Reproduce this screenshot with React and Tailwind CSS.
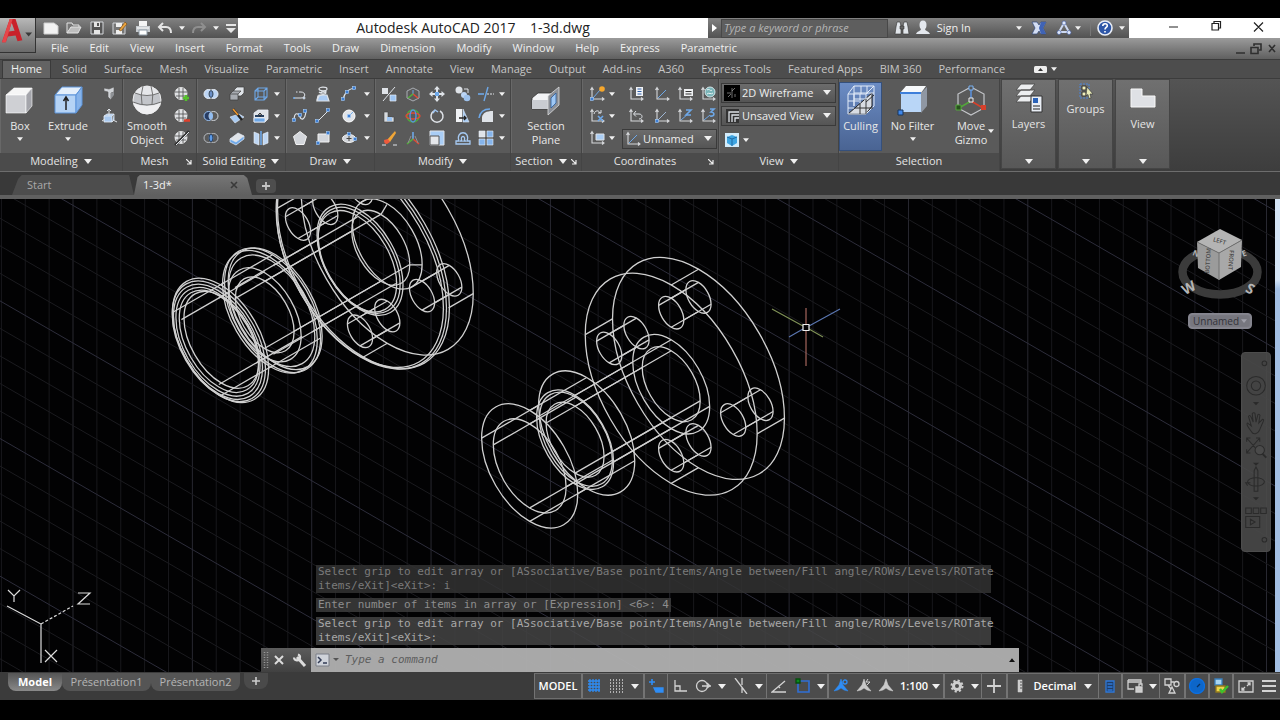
import React from 'react';

const MENUS = ['File', 'Edit', 'View', 'Insert', 'Format', 'Tools', 'Draw', 'Dimension', 'Modify', 'Window', 'Help', 'Express', 'Parametric'];

const RIBBON_TABS = ['Solid', 'Surface', 'Mesh', 'Visualize', 'Parametric', 'Insert', 'Annotate', 'View', 'Manage', 'Output', 'Add-ins', 'A360', 'Express Tools', 'Featured Apps', 'BIM 360', 'Performance'];

const W = '#dfe3e8';
const B = '#6ea8e8';

// Small 16px tool glyphs
const GLYPHS = {
  new: <path d="M1 3h10l4 3v8H1z" fill="#f2f2f2" stroke="#cfcfcf" />,
  open: <g stroke="#e4e4e4" fill="#777"><path d="M1 13V3h5l1 2h6v2" /><path d="M1 13l4-6h10l-3 6z" fill="#bdbdbd" /></g>,
  save: <g><path d="M2 2h12v12H2z" fill="#555" stroke="#d5d8dc" /><path d="M5 2h6v5H5z" fill="#e5e5e5" /><path d="M5 10h6v4H5z" fill="#e5e5e5" /><path d="M8 3h2v3H8z" fill="#555" /></g>,
  saveas: <g><path d="M1 3h12v11H1z" fill="#777" stroke="#d5d8dc" /><path d="M4 3h6v4H4zM4 10h6v4H4z" fill="#eee" /><path d="M7 10l6-8 2 2-6 7z" fill="#e9a23d" stroke="#704512" strokeWidth=".6" /></g>,
  plot: <g><path d="M4 1h8v6H4z" fill="#f5f5f5" /><path d="M1 6h14v6H1z" fill="#c5c9cd" /><path d="M4 10h8v5H4z" fill="#fff" stroke="#8d9aa5" /><path d="M2 8h12" stroke="#fff" /></g>,
  undo: <path d="M6 3L2 7l4 4M2 7h7c4 0 5 2 5 6" fill="none" stroke="#e6e6e6" strokeWidth="2" />,
  redo: <path d="M10 3l4 4-4 4M14 7H7c-4 0-5 2-5 6" fill="none" stroke="#8f8f8f" strokeWidth="2" />,
  customize: <g fill="#e6e6e6"><path d="M3 4h10v2H3zM3 8h10l-5 5z" /></g>,
  find: <g fill="#e1e5ea" stroke="#333" strokeWidth=".6"><path d="M2 7l1-5h3l1 4v8H1z" /><path d="M9 6l1-4h3l1 5 1 7H9z" /><path d="M6 6h4v3H6z" fill="#666" /></g>,
  user: <g fill="#e4e8ee"><ellipse cx="8" cy="5" rx="3.5" ry="4.5" /><path d="M1 14c2-4 4-2 5-5h4c1 3 3 1 5 5z" /></g>,
  exchange: <g><path d="M1 2h5l2 3 2-3h5l-3 6 3 6h-5l-2-3-2 3H1l3-6z" fill="#d4def3" stroke="#30477a" strokeWidth=".7" /><path d="M10 2h5l-3 6 3 6h-5L8 8z" fill="#3f63b5" /></g>,
  a360: <g><path d="M8 3l5 9H3z" fill="none" stroke="#cdd9f2" strokeWidth="2" /><g fill="#dfe8fa" stroke="#3d57a0" strokeWidth=".6"><circle cx="8" cy="3" r="2" /><circle cx="3" cy="12.500" r="2" /><circle cx="13" cy="12.500" r="2" /></g></g>,
  help: <g><circle cx="8" cy="8" r="7" fill="#2e57a8" stroke="#e9eef7" strokeWidth="1.6" /><path d="M5.800 6c0-3 4.500-3 4.500-.3C10.300 7.500 8 7.500 8 9.500M8 11v1.600" fill="none" stroke="#fff" strokeWidth="1.6" /></g>,
  polysolid: <g><path d="M3 2l5 1 5-2v5l-3 1v7l-3-3V6L3 5z" fill="#cfd2d6" stroke="#555" strokeWidth=".6" /><path d="M10 7l3-1v3l-3 4z" fill="#8f9296" /></g>,
  presspull: <g><path d="M3 8h8v6H3zM3 8l3-2h7l-2 2M13 6v6l-2 2" fill="#a9c9ef" stroke="#e7edf5" strokeWidth=".8" /><path d="M8 8V1M6 3l2-2 2 2M1 13l3-2M12 12l4 2" stroke={W} fill="none" /></g>,
  meshMore: <g><Globe /><path d="M12 9v6M9 12h6" stroke="#55c12c" strokeWidth="2.500" /></g>,
  meshLess: <g><Globe /><path d="M10 12.500h6" stroke="#e0402c" strokeWidth="2.500" /></g>,
  meshRefine: <g><Globe /><path d="M1 15L15 1" stroke="#333" strokeWidth="2.400" /><path d="M2 15L15 2" stroke={W} /></g>,
  union: <g fill="#bcd5f5" stroke="#e8eef6"><circle cx="5.500" cy="8" r="4.500" /><circle cx="10.500" cy="8" r="4.500" /><ellipse cx="8" cy="8" rx="2" ry="3.400" fill="#6a8fc8" stroke="#345" /></g>,
  subtract: <g fill="none" stroke="#cfd3d8"><circle cx="5.500" cy="8" r="4.500" fill="#263c63" stroke="#9cc3f3" /><circle cx="10.500" cy="8" r="4.500" fill="#5a5a5a" /><ellipse cx="8" cy="8" rx="2" ry="3.600" fill="#92bdf0" stroke="none" /></g>,
  intersect: <g fill="none" stroke="#b6bac0"><circle cx="5.500" cy="8" r="4.500" /><circle cx="10.500" cy="8" r="4.500" /><ellipse cx="8" cy="8" rx="2" ry="3.600" fill="#5d9be8" stroke="#1d3557" /></g>,
  extrudeFaces: <g stroke="#3c3c3c" strokeWidth=".7"><path d="M5 4l3-3h7v6l-3 3H5z" fill={W} /><path d="M1 8h8v6H1zM1 8l3-3h8L9 8" fill="#a7abb1" /></g>,
  slice: <g><path d="M1 9l9-3 5 3-9 6z" fill="#a8caf2" stroke="#e8eef6" strokeWidth=".6" /><path d="M4 1l9 11" stroke="#222" strokeWidth="2.400" /><path d="M4 1l5 6" stroke="#e9952f" strokeWidth="1.800" /></g>,
  thicken: <g stroke="#e8eef6" strokeWidth=".7"><path d="M1 9l8-6 6 3-8 6z" fill={W} /><path d="M1 9l6 3 8-6v3l-8 6-6-3z" fill={B} /></g>,
  boxEdges: <path d="M2 5h9v9H2zM2 5l3-3h9v9l-3 3M11 5l3-3M5 2v9h9M5 11l-3 3" fill="none" stroke={B} strokeWidth="1.100" />,
  shell: <g stroke="#e8eef6" strokeWidth=".8"><path d="M1 5l4-3h10v9l-3 3H1z" fill={W} /><path d="M2 7h9v2H2z" fill="#28405f" stroke="none" /><path d="M1 10h11v4H1z" fill={B} /><path d="M7 5v4M5 7l2-2 2 2" fill="none" stroke="#222" /></g>,
  separate: <g fill="#bed6f3" stroke="#eef3f9" strokeWidth=".6"><path d="M1 2l5 2v11l-5-2zM15 2l-5 2v11l5-2z" /><path d="M8 1v14" stroke={B} strokeWidth="1.600" /></g>,
  polyline: <g fill="none" stroke={W}><path d="M2 12h7c5 0 5-6 0-6" /><path d="M9 6H4" strokeDasharray="2 1.500" /><circle cx="2" cy="12" r="1" fill={B} stroke="none" /><circle cx="12" cy="12" r="1" fill={B} /></g>,
  helix: <g fill="none" stroke={W} strokeWidth="1.200"><path d="M3 10l10 4H2z" fill="#b8d3f4" /><path d="M2 15h12l-2-6H4z" fill="#a9caf2" /><ellipse cx="8" cy="3" rx="4" ry="1.800" /><path d="M4 6c2 2 7 1 7-1M3 12c0-4 8-3 8-5 0-2-5-2-5 0" /></g>,
  arc: <g><path d="M2 14C3 7 8 2 15 2" fill="none" stroke={W} strokeWidth="1.200" /><Node x="2" y="13" /><Node x="6" y="6" /><Node x="13" y="2" /></g>,
  spline: <g><path d="M2 13C2 2 7 6 8 9s5 4 6-6" fill="none" stroke={W} strokeWidth="1.200" /><Node x="2" y="12" /><Node x="8" y="7" /><Node x="13" y="3" /></g>,
  line: <g><path d="M2 14L14 2" stroke={W} /><Node x="2" y="13" /><Node x="13" y="2" /></g>,
  circle: <g><circle cx="8" cy="8" r="6" fill={W} stroke="#fff" /><path d="M8 8l4-4" stroke={B} /><Node x="8" y="8" /></g>,
  polygon: <path d="M8 1.500l6.500 5-2.500 8H4l-2.500-8z" fill="#d2d5da" stroke="#f2f2f2" />,
  rect: <g><path d="M3 4h11v8H3z" fill="#d2d5da" stroke="#f2f2f2" /><Node x="13" y="3" /><Node x="3" y="13" /></g>,
  ellipse: <g><ellipse cx="8" cy="8.500" rx="6.500" ry="4" fill="#d2d5da" stroke="#f2f2f2" /><path d="M8 6v5M5.500 8.500h5" stroke="#444" /><Node x="8" y="4" /><Node x="14" y="9" /></g>,
  align3d: <g><path d="M1 2h6v6H1z" fill={W} /><path d="M9 9h6v6H9z" fill="#9cc4f2" stroke="#e8eef6" strokeWidth=".7" /><path d="M2 15L14 1" stroke={W} /></g>,
  scale3d: <g><path d="M3 4h4v5h6v5H3z" fill="#d6dade" stroke="#444" strokeWidth=".6" /><path d="M6 9h5v4H6z" fill="#9cc4f2" /></g>,
  erase: <g><path d="M6 10l8-9 1 2-6 9z" fill="#f0a637" /><path d="M3 10l4-1 2 3-3 2c-2 0-3-1-3-4z" fill="#ef5a3c" /><path d="M1 15h4M12 15h4" stroke={W} /></g>,
  move3d: <g fill="none" stroke="#a9adb3"><path d="M8 2l6 3v7l-6 3-6-3V5z" /><path d="M8 8V4" stroke={B} /><path d="M8 8l5 4" stroke="#e24a35" strokeWidth="1.600" /><path d="M8 8l-5 4" stroke="#52b13b" strokeWidth="1.600" /></g>,
  rotate3d: <g fill="none" strokeWidth="1.400"><circle cx="8" cy="8" r="6" stroke="#4eab3b" /><ellipse cx="8" cy="8" rx="7" ry="3" stroke="#df4936" /><ellipse cx="8" cy="8" rx="3" ry="6" stroke="#5a92e0" /></g>,
  scaleGizmo: <g strokeWidth="1.600" fill="none"><path d="M8 9V2" stroke={B} /><path d="M8 9l6 5" stroke="#e24a35" /><path d="M8 9l-6 5" stroke="#52b13b" /><path d="M6 6l-3 7M10 6l3 7" stroke="#919191" strokeWidth="1" /></g>,
  move: <g fill={W}><path d="M8 0l3 3.500H9V7h3.500V5L16 8l-3.500 3V9H9v3.500h2L8 16l-3-3.500h2V9H3.500v2L0 8l3.500-3v2H7V3.500H5z" /><path d="M6 6h4v4H6z" fill={B} /></g>,
  rotate: <g fill="none" stroke={W} strokeWidth="1.500"><path d="M5 3a6 6 0 1 0 6 0" /><path d="M4 5l2-3 3 2" stroke="#9ec3ef" /></g>,
  scale: <g><path d="M1 1h14v14H1z" fill="#a9cdf5" stroke={W} /><path d="M1 6h9v9H1z" fill="#e5e7ea" stroke="#555" /></g>,
  copy: <g><circle cx="4" cy="4" r="3.500" fill={W} /><circle cx="9" cy="9" r="3" fill="#bcd5f5" /><circle cx="12" cy="12" r="3.300" fill="#9dc1ec" /><path d="M9 3h4v4" fill="none" stroke={W} /></g>,
  mirror: <g><path d="M1 1h6v13H1z" fill="#f0f2f5" /><path d="M8 1l6 13H8z" fill="#a6caf3" stroke="#dce8f7" strokeWidth=".6" /><path d="M4 10h7M9 8l2 2-2 2" stroke="#222" fill="none" strokeWidth="1.300" /></g>,
  offset: <path d="M1 14h14v-3h-3C16 0 0 0 4 11H1zM5 11h2c-3-6 5-6 2 0h2" fill="none" stroke="#a6caf3" strokeWidth="1.300" />,
  trim: <g fill="none"><path d="M0 8h6" stroke={B} strokeWidth="1.600" /><path d="M9 8h7" stroke={W} strokeDasharray="2 1" /><path d="M6 15L10 1" stroke={B} strokeWidth="1.400" /></g>,
  fillet: <g><path d="M4 14V9c1-4 4-6 11-6v11z" fill={W} /><path d="M1 10C2 4 6 1 12 1" fill="none" stroke={B} strokeWidth="1.500" /></g>,
  array: <g stroke="#e7eef7" strokeWidth=".6" fill="#86b5ec"><path d="M1 1h6v6H1z" fill={W} /><path d="M9 1h6v6H9zM1 9h6v6H1zM9 9h6v6H9z" /></g>,
  ucsWorld: <g><Ucs /><path d="M4 12l7-8" stroke={B} /><circle cx="13" cy="3" r="2.800" fill="#f6a72c" /><Node x="3" y="13" /></g>,
  ucsX: <g><Ucs /><path d="M5 6c1-4 5-4 6-1M9 5h3V2" stroke={W} fill="none" /><path d="M9 8l5 5M14 8l-5 5" stroke={B} strokeWidth="1.600" /></g>,
  ucsView: <g><Ucs /><path d="M7 4h8v6H7z" fill="#aacdf4" stroke={W} /></g>,
  ucsNamed: <g><Ucs /><path d="M8 1h7v9H8z" fill="#f1f3f5" /><path d="M9.500 3h4M9.500 5.500h4M9.500 8h4" stroke="#2d5da8" /></g>,
  ucs: <g><Ucs /><path d="M4 12l8-8" stroke={B} /></g>,
  ucsPrev: <g><Ucs /><path d="M6 6h5c4 0 4 5 0 5M8 3L5.500 6 8 8.500" stroke={W} fill="none" /></g>,
  ucsOrigin: <g><Ucs /><path d="M4 12l8-8" stroke="#9fb7d5" /><Node x="3" y="13" /></g>,
  ucsList: <g><Ucs /><path d="M7 3h9v7H7z" fill="#eef0f2" /><path d="M8.500 5.500h6M8.500 8h6" stroke="#333" /></g>,
  ucsZ: <g><Ucs /><path d="M4 12l7-6" stroke={B} /><path d="M9 2h5L9 7h5" stroke={B} strokeWidth="1.600" fill="none" /></g>,
  ucsGlobe: <g><Ucs /><circle cx="10" cy="6" r="5" fill="#79b4b8" stroke="#d5e6ea" /><path d="M7 4c3-2 3 2 5 0M7 8c2-2 4 1 6-1" stroke="#e9f3f3" fill="none" /></g>,
  ucs3: <g><Ucs /><path d="M4 12l6-5" stroke={B} /><path d="M10 1h4l-3 3c4 0 4 5-1 4" stroke={B} strokeWidth="1.600" fill="none" /></g>,
  wire: <g><path d="M0 0h16v16H0z" fill="#000" /><path d="M3 8h4M8 3v10M11 3l-3 3M11 9v3M4 12l3-3" stroke="#bbb" strokeWidth=".6" /></g>,
  viewIcon: <g><path d="M2 1h13v14H2z" fill="#333" /><path d="M5 14V4h10M8 14V7h7M11 14v-4h4" stroke={W} fill="none" strokeWidth="1.300" /></g>,
  visual: <g><path d="M1 1h14v14H1z" fill="#d2ecfb" /><path d="M3 5l5-2 5 2v6l-5 3-5-3z" fill="#3ea5e2" /><path d="M3 5l5 2 5-2M8 7v7" stroke="#1c6ba5" fill="none" /></g>,
};

function Globe() {
  return (
    <g fill="none" stroke="#4c4c4c" strokeWidth=".8">
      <circle cx="7" cy="7.500" r="6" fill="#dfe1e4" stroke="#f3f3f3" />
      <path d="M1 6h12M2 10h10M5 2v11M9 2v11" />
    </g>
  );
}

function Node({ x, y }) {
  return <rect x={x - 1.5} y={y - 1.5} width="3" height="3" fill="#3d7fd6" stroke="#a9cdf5" strokeWidth=".6" />;
}

function Ucs() {
  return <path d="M3 2v11h12M1.500 4L3 1.500 4.500 4M13 11.500l2 1.500-2 1.500" fill="none" stroke="#d5d7da" strokeWidth="1.100" />;
}

const Glyph = ({ name }) => (
  <svg viewBox="0 0 16 16" className="w-4 h-4 shrink-0" aria-hidden="true">{GLYPHS[name]}</svg>
);

const Arrow = ({ big }) => (
  <svg viewBox="0 0 8 5" className={big ? 'w-2 h-[5px] shrink-0' : 'w-1.5 h-1 shrink-0'} aria-hidden="true">
    <path d="M0 0h8L4 5z" fill="#f0f0f0" />
  </svg>
);

const Tool = ({ name }) => (
  <button type="button" aria-label={name} className="flex items-center justify-center h-full w-full">
    {name === 'down' ? <Arrow /> : <Glyph name={name} />}
  </button>
);

const Tools = ({ names, className }) => (
  <div className={`grid auto-rows-[22px] ${className}`}>
    {names.map((n, i) => <Tool key={i} name={n} />)}
  </div>
);

const Panel = ({ title, arrow, launcher, className, children }) => (
  <section className={`flex flex-col shrink-0 border-r border-[#444] shadow-[inset_1px_0_0_#686868] ${className}`}>
    <div className="flex flex-1 pt-1">{children}</div>
    <div className={`relative flex items-center justify-center gap-1.5 h-[18px] pb-0.5 bg-[#4b4b4b] text-[#e4e4e4] ${launcher ? 'pr-2.5' : ''}`}>
      <span>{title}</span>
      {arrow && <Arrow big />}
      {launcher && (
        <svg viewBox="0 0 6 6" className="absolute right-1 top-1.5 w-[6px] h-[6px]"><path d="M0 0l5 5M5 1v4H1" stroke="#eee" fill="none" strokeWidth="1.2" /></svg>
      )}
    </div>
  </section>
);

const BigTool = ({ label, icon, arrow, sideArrow, className }) => (
  <button type="button" className={`relative flex flex-col items-center shrink-0 pt-px text-[#e8e8e8] leading-[14px] ${className}`}>
    <svg viewBox="0 0 32 32" className="w-8 h-8 mb-[3px]" aria-hidden="true">{icon}</svg>
    <span className="whitespace-pre-line">{label}</span>
    {arrow && <span className="mt-1"><Arrow /></span>}
    {sideArrow && <span className="absolute right-1 bottom-5"><Arrow /></span>}
  </button>
);

const Dropdown = ({ icon, value, label, className }) => (
  <div className={`relative flex items-center h-5 border border-[#3a3a3a] bg-gradient-to-b from-[#6c6c6c] to-[#555] text-[#eee] ${className}`}>
    <span className="pl-0.5 flex"><Glyph name={icon} /></span>
    <select aria-label={label} className="appearance-none flex-1 min-w-0 bg-transparent pl-0.5 outline-none">
      <option>{value}</option>
    </select>
    <span className="absolute right-1 top-[6px] pointer-events-none flex"><Arrow big /></span>
  </div>
);

const SidePanel = ({ label, className, children }) => (
  <button type="button" className={`flex flex-col items-center shrink-0 w-[55px] mr-[2px] h-[90px] bg-gradient-to-b from-[#707070] to-[#585858] border border-[#454545] text-[#e4e4e4] ${className}`}>
    {children}
    <span>{label}</span>
    <span className="mt-auto mb-1"><Arrow big /></span>
  </button>
);

const BIG = {
  box: <g stroke="#fff" strokeWidth=".6"><path d="M2 11l8-7h18l-6 7z" fill="#f6f6f6" /><path d="M2 11h20v18H2z" fill="#cfd0d4" /><path d="M22 11l6-7v18l-6 7z" fill="#a4a5ab" /></g>,
  extrude: <g stroke="#5c94da" strokeWidth="1"><path d="M3 11l7-8h20l-6 8z" fill="#e4effb" /><path d="M3 11h21v18H3z" fill="#b5d3f5" /><path d="M24 11l6-8v18l-6 8z" fill="#86b3ea" /><path d="M14 26V14M11.500 17l2.500-4 2.500 4" stroke="#222" strokeWidth="1.500" fill="none" /></g>,
  sphere: <g stroke="#666" strokeWidth=".9"><circle cx="16" cy="16" r="14" fill="#c3c5ca" stroke="#f4f4f4" /><path d="M4 9c3-5 8-7 12-7s9 2 12 7q-12 5-24 0z" fill="#e6e7ea" stroke="none" /><path d="M4 9q12 5 24 0M2 18q14 6 28 0M12 2q-3 9-1 18M20 2q3 9 1 18" fill="none" /><path d="M2.500 19c4 15 23 15 27 0q-14 6-27 0z" fill="#efeff1" stroke="none" /></g>,
  section: <g stroke="#333" strokeWidth=".8"><path d="M2 14l6-5h15v13l-3 3H2z" fill="#f2f3f5" /><path d="M2 16h18v9H2z" fill="#c9ccd1" stroke="none" /><path d="M18 12l11-9v18l-11 10z" fill="#8b8f96" stroke="#ddd" /><path d="M21 14l5-5v10l-5 5z" fill="#9fc8f5" stroke="#2a5b9b" /></g>,
  culling: <g fill="none" stroke="#e3ecf9" strokeWidth="1"><path d="M3 30L27 9v13l-6 8z" fill="#d8dce3" stroke="#222" /><path d="M3 10h18v20H3zM3 10l6-8h20v20l-8 8M21 10l8-8M9 2v20M3 17h11M3 24h6M9 10v12M15 10v9M16 2v8M22 2v8M9 9h20M9 15h12" /><path d="M15 20v10M10 24h18M21 15v15M21 18l8-7" stroke="#333" /></g>,
  nofilter: <g><path d="M3 9l6-7h20l-5 7z" fill="#f6f8fa" /><path d="M4 10h20v18H4z" fill="#b9d6f7" /><path d="M24 9l6-6v19l-6 7z" fill="#8f97a3" /><path d="M3 9h21" stroke="#3e7fda" strokeWidth="2" /><path d="M1 26h5v5H1z" fill="#3e86e8" stroke="#16345d" /></g>,
  gizmo: <g fill="none"><path d="M16 3l13 7v14l-13 7-13-7V10z" stroke="#c4c6ca" strokeWidth="1.200" /><path d="M16 16V4" stroke="#5a92e0" strokeWidth="1.500" /><path d="M16 17l12 7" stroke="#d6402b" strokeWidth="1.500" /><path d="M16 17L4 24" stroke="#53a63b" strokeWidth="1.500" /><path d="M14 2h4v4h-4z" stroke="#78b1f2" fill="#555" /><path d="M14 14h4v4h-4z" stroke="#eee" fill="#555" /><path d="M1 21h5v5H1z" fill="#284f1e" stroke="#53a63b" /><path d="M26 21h5v5h-5z" fill="#d6402b" /></g>,
};

const Sep = () => <span className="w-px h-full bg-[#747474] shrink-0" />;

const S = ({ children, className }) => (
  <button type="button" className={`flex items-center justify-center h-full shrink-0 ${className}`}>{children}</button>
);

const Ico = ({ children, color = '#d2d2d2' }) => (
  <svg viewBox="0 0 16 16" className="w-4 h-4" fill="none" stroke={color} strokeWidth="1.3" aria-hidden="true">{children}</svg>
);

const ANNO = 'M8 1l2 6 5 6-4-1-3-2-3 2-4 1 5-6z';

function StatusBar() {
  return (
    <div className="ml-auto flex h-[26px] mt-px items-center bg-[#4c4c4c] border-y border-[#6e6e6e] text-white">
      <Sep />
      <S className="w-[46px] font-semibold">MODEL</S>
      <Sep /><Sep />
      <S className="w-[22px]"><Ico color="#2f8df5"><path d="M2 3h12M2 6h12M2 9h12M2 12h12M4 1v13M7 1v13M10 1v13M13 1v13" /></Ico></S>
      <S className="w-[22px]"><Ico><path d="M2 2h13M2 5h13M2 8h13M2 11h13M2 14h13" strokeDasharray="1 2" /></Ico></S>
      <S className="w-4"><Arrow big /></S>
      <Sep /><Sep />
      <S className="w-[22px]"><Ico color="#2f8df5"><path d="M4 1v6M1 4h6" strokeWidth="1.600" /><path d="M6 10h9v4H8z" fill="#2f8df5" /></Ico></S>
      <Sep />
      <S className="w-6"><Ico><path d="M3 2v11h12M3 8h5v5" /></Ico></S>
      <S className="w-[22px]"><Ico><circle cx="7" cy="8" r="5.500" /><path d="M7 8h9M12 5l3 3-3 2" /></Ico></S>
      <S className="w-4"><Arrow big /></S>
      <S className="w-[22px]"><Ico><path d="M2 0l12 16M9 0v7M9 10v5" /></Ico></S>
      <S className="w-3.5"><Arrow big /></S>
      <Sep />
      <S className="w-6"><Ico><path d="M14 3L1 14h14M7 8l2 2" /></Ico></S>
      <S className="w-6"><Ico color="#2f6fd5"><path d="M3 3h11v11H3z" strokeWidth="1.600" /><path d="M1 1h4v4H1z" fill="#0c8a1c" stroke="#054d0d" /></Ico></S>
      <S className="w-3"><Arrow big /></S>
      <Sep /><Sep />
      <S className="w-6"><Ico color="#2f8df5"><path d={ANNO} fill="#2f8df5" strokeWidth=".5" /><circle cx="12" cy="4" r="2" /></Ico></S>
      <S className="w-[22px]"><Ico><path d={ANNO} fill="#c9c9c9" strokeWidth=".5" /><path d="M12 1l-2 3h4l-3 3" strokeWidth="1" /></Ico></S>
      <S className="w-[22px]"><Ico><path d={ANNO} fill="#c9c9c9" strokeWidth=".5" /></Ico></S>
      <S className="w-[46px] gap-1 font-semibold">1:100<Arrow big /></S>
      <Sep /><Sep />
      <S className="w-6"><Ico color="#cfcfcf"><circle cx="8" cy="8" r="3.500" strokeWidth="3" /><circle cx="8" cy="8" r="5.500" strokeDasharray="2.200 2.100" strokeWidth="2" /></Ico></S>
      <S className="w-3"><Arrow big /></S>
      <Sep />
      <S className="w-6"><Ico><path d="M8 1v14M1 8h14" strokeWidth="1.800" /></Ico></S>
      <Sep /><Sep />
      <S className="w-6"><Ico><path d="M6 2h4v12H6z" fill="#ccc" strokeWidth=".5" /><path d="M8 4h2M8 7h2M8 10h2" stroke="#555" strokeWidth="1" /></Ico></S>
      <S className="w-[46px] font-semibold">Decimal</S>
      <S className="w-5"><Arrow big /></S>
      <Sep />
      <S className="w-[22px]"><Ico color="#2f78d8"><path d="M4 3h8v11H4z" fill="#1f3d68" /><path d="M5.500 6h5M5.500 9h5M5.500 12h5" /></Ico></S>
      <Sep /><Sep />
      <S className="w-6"><Ico><path d="M1 2h13v4M1 2v9h6M1 4h13" /><path d="M9 9h6v5H9z" fill="#ccc" /><path d="M12 9V6h3v2" /></Ico></S>
      <S className="w-3"><Arrow big /></S>
      <Sep />
      <S className="w-6"><Ico><path d="M1 1h6v6H1zM7 4h3M4 7l3 4" /><circle cx="12.500" cy="6" r="2.500" /><path d="M8 9l3 6H5z" /></Ico></S>
      <Sep /><Sep />
      <S className="w-[22px]"><Ico color="#0c6fe0"><circle cx="8" cy="8" r="7.500" fill="#0d66c9" /><path d="M8 9l3-3" stroke="#08305f" /></Ico></S>
      <Sep /><Sep />
      <S className="w-[22px]"><Ico><path d="M2 1h7v6H2z" fill="#a9d6f2" stroke="#3a7fbc" /><path d="M3 8h9v6H3z" fill="#f0d34c" stroke="#927a1d" /><path d="M7 11l2 3 6-6" stroke="#3fbf2d" strokeWidth="2.400" /></Ico></S>
      <Sep /><Sep />
      <S className="w-6"><Ico><path d="M1 3h14v11H1zM9 8l3-3M9.500 5H12v2.500M7 9l-3 3M4 9.500V12h2.500" /></Ico></S>
      <S className="w-[22px]"><Ico><path d="M1 3h14M1 8h14M1 13h14" strokeWidth="1.800" /></Ico></S>
    </div>
  );
}

// Isometric projection of a solid of revolution: axis runs up and to the right
const at = (c, t) => [c[0] + 0.866 * t, c[1] - 0.5 * t];

const Ring = ({ c, t = 0, r }) => {
  const [x, y] = at(c, t);
  return <ellipse rx={r} ry={r * 0.577} transform={`translate(${x} ${y}) rotate(60)`} />;
};

const Cylinder = ({ c, from, to, r, open }) => {
  const [x1, y1] = at(c, from);
  const [x2, y2] = at(c, to);
  const quads = [[0, 0.816 * r], [0, -0.816 * r], [0.707 * r, 0.408 * r], [-0.707 * r, -0.408 * r]];
  return (
    <g>
      {!open && <Ring c={c} t={from} r={r} />}
      {!open && <Ring c={c} t={to} r={r} />}
      {quads.map(([dx, dy], i) => <path key={i} d={`M${x1 + dx} ${y1 + dy}L${x2 + dx} ${y2 + dy}`} />)}
    </g>
  );
};

const HOLES = [[0, -71.5], [-62, -35.8], [62, 35.8], [0, 71.5]];

const Rings = ({ c, list }) => list.map(([t, r], i) => <Ring key={i} c={c} t={t} r={r} />);

const Flange = ({ c }) => (
  <g>
    <Cylinder c={c} from={0} to={31.5} r={121.6} />
    {HOLES.map(([dx, dy], i) => <Cylinder key={i} c={[c[0] + dx, c[1] + dy]} from={0} to={31.5} r={17.8} />)}
    <Cylinder c={c} from={-163.4} to={-97.6} r={68} />
    <Cylinder c={c} from={-163.4} to={-110} r={51.5} />
    <Cylinder c={c} from={-111} to={0} r={54.4} />
    <Cylinder c={c} from={-111} to={0} r={41} />
  </g>
);

// Same part with rounded edges and a chamfered bore
const FilletedFlange = ({ c }) => (
  <g>
    <Cylinder c={c} from={3} to={31.5} r={121.6} open />
    <Rings c={c} list={[[31.5, 121.6], [4, 121.6], [1.5, 120.5], [0, 118]]} />
    {HOLES.map(([dx, dy], i) => <Cylinder key={i} c={[c[0] + dx, c[1] + dy]} from={0} to={31.5} r={17.8} />)}
    <Cylinder c={c} from={-161} to={-101} r={68} open />
    <Rings c={c} list={[[-161, 68], [-163, 66], [-164, 63], [-164, 59.5], [-163, 56], [-160, 53]]} />
    <Rings c={c} list={[[-101, 68], [-98, 66.5], [-104, 67], [-102, 61], [-110, 51.5], [-110, 41.5]]} />
    <Cylinder c={c} from={-163} to={-110} r={53} open />
    <Cylinder c={c} from={-100} to={-3} r={54.4} open />
    <Cylinder c={c} from={-110} to={24} r={41} open />
    <Rings c={c} list={[[0, 60.8], [-1, 58], [-3, 55.5], [24, 41], [31.5, 49.3]]} />
    <path d={`M${c[0] + 21} ${c[1] - 45.5}l6 -10M${c[0] + 50} ${c[1] + 5}h12`} />
  </g>
);

const range = (n) => Array.from({ length: n }, (_, i) => i);

function ModelSpace() {
  return (
    <svg viewBox="0 199 1275 473" preserveAspectRatio="xMidYMid slice" className="absolute inset-0 w-full h-full" fill="none">
      {range(54).map((i) => {
        const x = 1.4 + i * 23.87;
        return <path key={i} d={`M${x} 199V672`} stroke={i % 5 === 3 ? '#282831' : '#18181c'} />;
      })}
      {range(46).map((i) => {
        const y = -525 + i * 27.53;
        return <path key={i} d={`M0 ${y}L1275 ${y + 735.7}`} stroke={i % 5 === 0 ? '#2d2d3b' : '#1b1b1f'} />;
      })}
      <g stroke="#d0d0d0" strokeWidth="1.3">
        <Flange c={[671.2, 384.2]} />
        <FilletedFlange c={[360, 259.8]} />
      </g>
      {/* crosshair */}
      <g strokeWidth="1.2">
        <path d="M806 308v16M806 331v35" stroke="#a5665c" />
        <path d="M772 309l31 17M809 329l14 8" stroke="#7f9156" />
        <path d="M840 309l-31 17M803 329l-14 8" stroke="#5a76b0" />
        <path d="M803 324.500h6v6h-6z" stroke="#eee" />
      </g>
      {/* UCS icon */}
      <g stroke="#dcdcdc" strokeWidth="1.2">
        <path d="M41 663V624L7 606" />
        <path d="M41 624L73 606" strokeDasharray="3 2" />
        <path d="M8 590l6 6 6-6M14 596v6M78 593h12l-12 11h12M45 650l12 12M57 650l-12 12" />
      </g>
    </svg>
  );
}

const ViewCube = () => (
  <div className="absolute top-[29px] right-3 flex flex-col items-center w-[86px] gap-3">
    <svg viewBox="1177 228 86 73" className="w-[86px] h-[73px]">
      <ellipse cx="1220" cy="272" rx="37.500" ry="22.500" fill="none" stroke="#3b3b3b" strokeWidth="8.500" />
      <g fill="#b5b5b5" fontSize="14" fontWeight="700" fontFamily="Open Sans" textAnchor="middle">
        <text transform="translate(1191 292) rotate(-28)">W</text>
        <text transform="translate(1248 293) rotate(28)">S</text>
        <text transform="translate(1195 256) rotate(20)" fontSize="8">N</text>
        <text transform="translate(1245 256) rotate(-20)" fontSize="8">E</text>
      </g>
      <path d="M1220 229l22 11-23 13-22-11z" fill="#b4b4b4" />
      <path d="M1197 242l22 11v27l-21-12z" fill="#9b9b9b" />
      <path d="M1242 240l-23 13v27l22-13z" fill="#a8a8a8" />
      <path d="M1197 242l22 11 23-13M1219 253v27" stroke="#707070" fill="none" />
      <g fill="#4a4a4a" fontSize="6" fontWeight="600" fontFamily="Open Sans" textAnchor="middle">
        <text transform="translate(1219 243) rotate(16)">LEFT</text>
        <text transform="translate(1210 261) rotate(-86)">BOTTOM</text>
        <text transform="translate(1229 260) rotate(94)">FRONT</text>
      </g>
    </svg>
    <button type="button" className="flex items-center w-16 h-4 pl-1 rounded-sm border border-[#85858f] bg-[#77777f] text-[10px] text-[#33333a] shadow-[inset_0_0_2px_#aaaab5]">
      Unnamed
      <svg viewBox="0 0 8 5" className="ml-auto mr-1 w-1.5 h-1"><path d="M0 0h8L4 5z" fill="#a0a0aa" /></svg>
    </button>
  </div>
);

const NavBar = () => (
  <div className="absolute top-[153px] right-1 w-[30px] h-[200px] rounded border border-[#4c4c4c] bg-[#4a4a4a]/90">
    <svg viewBox="0 0 30 200" className="w-full h-full" fill="none" stroke="#2b2b2b" strokeWidth="1.1">
      <circle cx="24" cy="5" r="2.500" />
      <circle cx="15" cy="29" r="10" />
      <circle cx="15" cy="29" r="5" />
      <path d="M13 47h4l-2 2zM13 112h4l-2 2zM13 149h4l-2 2z" fill="#222" />
      <path d="M10 78c-3-4-6-8-4-9l4 3-3-10c1-2 2-1 3 1l2 5-1-9c1-2 3-1 3 0l1 9 2-8c1-1 3 0 2 2l-1 7 4-4c2 0 1 2 0 4l-3 7c-2 5-7 6-9 2z" />
      <path d="M5 85l14 16M19 85L5 101M5 89v-4h4M15 85h4v4M5 97v4h4" />
      <circle cx="19" cy="98" r="5" fill="#4a4a4a" />
      <path d="M22 102l4 4" strokeWidth="2" />
      <ellipse cx="15" cy="132" rx="9" ry="4.500" />
      <path d="M13 120l2-4 2 4v22h-4zM6 136l-2-3h5" />
      <path d="M4 160h6v6H4zM12 160h6v6h-6zM20 160h6v6h-6zM4 169h15v12H4zM9 172v6l5-3z" />
      <circle cx="24" cy="194" r="2.500" />
    </svg>
  </div>
);

const CommandLine = () => (
  <div className="absolute bottom-0 left-[261px] w-[758px] max-w-full font-['DejaVu_Sans_Mono','Liberation_Mono',monospace] text-[11px] leading-[14px]">
    <div className="flex flex-col items-start gap-[5px] pl-[55px] pr-7 mb-[3px] whitespace-nowrap">
      <p className="w-full px-0.5 bg-[#333]/85 text-[#7a7a7a]">Select grip to edit array or [ASsociative/Base point/Items/Angle between/Fill angle/ROWs/Levels/ROTate<br />items/eXit]&lt;eXit&gt;: i</p>
      <p className="px-0.5 bg-[#3d3d3d]/85 text-[#8d8d8d]">Enter number of items in array or [Expression] &lt;6&gt;: 4</p>
      <p className="w-full px-0.5 bg-[#444]/85 text-[#a8a8a8]">Select grip to edit array or [ASsociative/Base point/Items/Angle between/Fill angle/ROWs/Levels/ROTate<br />items/eXit]&lt;eXit&gt;:</p>
    </div>
    <div className="flex h-6">
      <div className="flex items-center w-[50px] bg-gradient-to-b from-[#5c5c5c] to-[#414141]">
        <svg viewBox="0 0 50 24" className="w-full h-full" fill="none" stroke="#dcdcdc">
          <path d="M3.500 4v16M6.500 4v16" stroke="#999" strokeDasharray="1 1.500" strokeWidth="1.500" />
          <path d="M14 8l8 8M22 8l-8 8" strokeWidth="2" />
          <path d="M36 9l8 9" strokeWidth="3" />
          <path d="M37 6.500a3 3 0 1 1-4 3" strokeWidth="2.200" />
        </svg>
      </div>
      <label className="flex flex-1 items-center bg-[#b1b1b1]/95 pl-1">
        <svg viewBox="0 0 24 14" className="w-6 h-3.5 mr-1.5" fill="none">
          <path d="M1 1h13v12H1z" fill="#cfd3da" stroke="#7b7f88" />
          <path d="M3 4l3 3-3 3M8 10h4" stroke="#333c55" strokeWidth="1.500" />
          <path d="M18 5h6l-3 3z" fill="#555" />
        </svg>
        <input aria-label="Command" placeholder="Type a command" className="flex-1 min-w-0 bg-transparent italic outline-none placeholder:text-[#5e5e5e]" />
        <svg viewBox="0 0 8 5" className="w-1.5 h-1 mr-1"><path d="M0 5h8L4 0z" fill="#111" /></svg>
      </label>
    </div>
  </div>
);

function TitleBar() {
  return (
    <header className="flex h-5 bg-gradient-to-b from-[#828282] to-[#525252] text-[#eee]">
      <div className="flex items-center w-[238px] shrink-0 pl-10">
        <Tools className="auto-rows-[20px] grid-cols-[22px_23px_23px_23px_23px_22px_12px_22px_12px_18px]" names={['new', 'open', 'save', 'saveas', 'plot', 'undo', 'down', 'redo', 'down', 'customize']} />
      </div>
      <h1 className="flex-1 bg-white text-[#222] text-[14px] leading-5 text-center whitespace-pre font-normal">Autodesk AutoCAD 2017{'    '}1-3d.dwg</h1>
      <div className="flex items-center w-[421px] shrink-0">
        <button type="button" aria-label="Collapse search" className="w-[13px] flex justify-center">
          <svg viewBox="0 0 5 8" className="w-[5px] h-2"><path d="M0 0v8l5-4z" fill="#fff" /></svg>
        </button>
        <input aria-label="Search" placeholder="Type a keyword or phrase" className="w-[168px] h-[19px] px-0.5 pb-0.5 italic bg-[#5e5e5e] border border-[#484848] outline-none placeholder:text-[#b4b4b4]" />
        <Tools className="ml-1 grid-cols-[20px_23px]" names={['find', 'user']} />
        <button type="button" className="w-[82px] pl-0.5 flex items-center justify-between">Sign In</button>
        <Tools className="grid-cols-[6px_34px_16px_12px]" names={['down', 'exchange', 'a360', 'down']} />
        <span className="w-px h-4 bg-[#777] ml-1.5" />
        <Tools className="ml-1 grid-cols-[20px_14px]" names={['help', 'down']} />
      </div>
      <div className="flex w-[151px] shrink-0 bg-white">
        <svg viewBox="0 0 151 20" className="w-full h-full" fill="none" stroke="#222" strokeWidth="1.2">
          <path d="M40 9h9M83 5.500h6.500v6.500H83zM85 5V3.500h6.500V10H90M125 4.500l9 9M134 4.500l-9 9" />
        </svg>
      </div>
    </header>
  );
}

function Ribbon() {
  return (
    <div className="flex h-[93px] bg-gradient-to-b from-[#545454] to-[#3d3d3d] border-t border-[#3c3c3c] leading-[14px]">
      <div className="flex bg-[#5a5a5a] shrink-0">
        <Panel title="Modeling" arrow className="w-[123px]">
          <BigTool label="Box" icon={BIG.box} arrow className="w-10" />
          <BigTool label="Extrude" icon={BIG.extrude} arrow className="w-14" />
          <Tools className="grid-cols-[26px]" names={['polysolid', 'presspull']} />
        </Panel>
        <Panel title="Mesh" launcher className="w-[74px]">
          <BigTool label={'Smooth\nObject'} icon={BIG.sphere} className="w-12" />
          <Tools className="grid-cols-[22px]" names={['meshMore', 'meshLess', 'meshRefine']} />
        </Panel>
        <Panel title="Solid Editing" arrow className="w-[89px]">
          <Tools className="pl-px grid-cols-[26px_25px_24px_8px]" names={['union', 'extrudeFaces', 'boxEdges', 'down', 'subtract', 'slice', 'shell', 'down', 'intersect', 'thicken', 'separate', 'down']} />
        </Panel>
        <Panel title="Draw" arrow className="w-[89px]">
          <Tools className="pl-0.5 grid-cols-[23px_23px_30px_6px]" names={['polyline', 'helix', 'arc', 'down', 'spline', 'line', 'circle', 'down', 'polygon', 'rect', 'ellipse', 'down']} />
        </Panel>
        <Panel title="Modify" arrow className="w-[136px]">
          <Tools
            className="pl-px grid-cols-[25px_23px_25px_27px_19px_14px]"
            names={['align3d', 'move3d', 'move', 'copy', 'trim', 'down', 'scale3d', 'rotate3d', 'rotate', 'mirror', 'fillet', 'down', 'erase', 'scaleGizmo', 'scale', 'offset', 'array', 'down']}
          />
        </Panel>
        <Panel title="Section" arrow launcher className="w-[71px]">
          <BigTool label={'Section\nPlane'} icon={BIG.section} className="w-full" />
        </Panel>
        <Panel title="Coordinates" launcher className="w-[137px]">
          <Tools className="pl-1 grid-cols-[22px_8px]" names={['ucsWorld', 'down', 'ucsX', 'down', 'ucsView', 'down']} />
          <div>
            <Tools className="pl-1.5 grid-cols-[28px_24px_22px_24px]" names={['ucsNamed', 'ucs', 'ucsList', 'ucsGlobe', 'ucsPrev', 'ucsOrigin', 'ucsZ', 'ucs3']} />
            <Dropdown label="Named UCS" icon="ucs" value="Unnamed" className="ml-1.5 mt-0.5 w-[95px]" />
          </div>
        </Panel>
        <Panel title="View" arrow className="w-[120px]">
          <div className="flex flex-col gap-[3px] pl-0.5">
            <Dropdown label="Visual style" icon="wire" value="2D Wireframe" className="w-[115px]" />
            <Dropdown label="Saved view" icon="viewIcon" value="Unsaved View" className="w-[115px]" />
            <Tools className="grid-cols-[22px_6px]" names={['visual', 'down']} />
          </div>
        </Panel>
        <Panel title="Selection" className="w-[161px]">
          <BigTool label="Culling" icon={BIG.culling} className="ml-px w-[41px] h-[67px] bg-gradient-to-b from-[#6b8cc4] to-[#4a6493] outline outline-[#35507c]" />
          <BigTool label="No Filter" icon={BIG.nofilter} arrow className="w-[63px]" />
          <BigTool label={'Move\nGizmo'} icon={BIG.gizmo} sideArrow className="w-[54px]" />
        </Panel>
      </div>
      <SidePanel label="Layers" className="ml-px">
        <svg viewBox="0 0 32 32" className="w-8 h-8 mt-[3px] mb-0.5">
          <path d="M8 1h14l-5 6H3zM8 7h14l-5 6H3zM8 13h14l-5 6H3z" fill="#eceef0" stroke="#555" />
          <path d="M18 13h11v16H18z" fill="#e9eef5" stroke="#333" />
          <path d="M20 15h5v5h-5z" fill="#2a62b8" />
          <path d="M20 23h7M20 26h7" stroke="#222" />
        </svg>
      </SidePanel>
      <SidePanel label="Groups">
        <svg viewBox="0 0 16 16" className="w-4 h-4 mt-[3px] mb-[3px]">
          <path d="M2 1h9v14H2z" fill="none" stroke="#4c86d9" strokeDasharray="2 1" />
          <path d="M4 3h4v4H4zM4 9h4v4H4z" fill="#efeebc" stroke="#333" />
          <path d="M9 4l6 7h-3l1 4-2 .500-1-4-2 1z" fill="#e8eab8" stroke="#333" strokeWidth=".6" />
        </svg>
      </SidePanel>
      <SidePanel label="View">
        <svg viewBox="0 0 32 32" className="w-8 h-8 mt-[3px] mb-0.5"><path d="M4 6h11v7h13v11H4z" fill="#dfe1e5" stroke="#f8f8f8" /></svg>
      </SidePanel>
    </div>
  );
}

export default function App() {
  return (
    <div className="min-h-screen flex flex-col bg-black py-[18px] pb-5 overflow-hidden font-['Open_Sans','Noto_Sans',sans-serif] text-[11px]">
      <div className="relative">
        <TitleBar />
        <button type="button" aria-label="Application menu" className="absolute left-0 top-0 w-9 h-[35px] flex items-center bg-gradient-to-b from-[#b8b8b8] to-[#6a6a6a] border-r border-b border-[#333]">
          <svg viewBox="0 0 36 35" className="w-full h-full">
            <path d="M2 25L10 1h6l7 22-5 1-2-6-8 1-2 6zM9 14l6-1-3-8z" fill="#c9222b" fillRule="evenodd" />
            <path d="M10 1h3L6 25H2z" fill="#e5464b" />
            <path d="M26 15h7l-3.500 4z" fill="#3a3a3a" />
          </svg>
        </button>
        <nav className="flex items-center h-[21px] pl-[51px] pr-1 gap-[21px] bg-gradient-to-b from-[#9b9b9b] to-[#606060] text-[#f0f0f0]">
          {MENUS.map((m) => <a key={m} href="#">{m}</a>)}
          <svg viewBox="0 0 40 16" className="ml-auto w-10 h-4" fill="none" stroke="#2f2f2f" strokeWidth="1.600">
            <path d="M0 12h9M15 6.500h7v6h-7zM18 5V3h7v6h-2M33 4l6 7M39 4l-6 7" />
          </svg>
        </nav>
      </div>
      <nav className="flex items-center h-[19px] pl-0.5 gap-[17px] bg-[#4d4d4d] border-t border-[#3b3b3b] text-[#c6c6c6]">
        <a href="#" className="h-full w-[49px] -mr-1.5 flex items-center justify-center bg-[#636363] border border-b-0 border-[#3a3a3a] text-[#f0f0f0]">Home</a>
        {RIBBON_TABS.map((t) => <a key={t} href="#">{t}</a>)}
        <button type="button" aria-label="Minimize ribbon" className="flex items-center gap-1 ml-3">
          <svg viewBox="0 0 13 7" className="w-[13px] h-[7px]"><rect width="13" height="7" rx="1.500" fill="#eee" /><path d="M4 5h5L6.500 2z" fill="#333" /></svg>
          <Arrow />
        </button>
      </nav>
      <Ribbon />
      <div className="flex items-end h-7 bg-[#393939] border-t border-[#6d6d6d] border-b-4 border-b-[#606060]">
        <button type="button" className="w-[122px] h-5 ml-3 pl-[15px] text-left text-[#a9a9a9] bg-[#4d4d4d] [clip-path:polygon(0_100%,5%_20%,8%_0,96%_0,100%_100%)]">Start</button>
        <button type="button" className="flex items-center w-[118px] h-5 pl-[9px] pr-[14px] text-[#f0f0f0] bg-gradient-to-b from-[#767676] to-[#606060] [clip-path:polygon(0_100%,3%_10%,5%_0,93%_0,96%_15%,100%_100%)]">
          1-3d*
          <svg viewBox="0 0 8 8" className="ml-auto w-2 h-2"><path d="M1 1l6 6M7 1L1 7" stroke="#393939" strokeWidth="1.600" /></svg>
        </button>
        <button type="button" aria-label="New drawing" className="flex items-center justify-center w-5 h-[14px] mb-0.5 ml-1 rounded bg-[#4e4e4e]">
          <svg viewBox="0 0 8 8" className="w-2 h-2"><path d="M4 0v8M0 4h8" stroke="#c4c4c4" strokeWidth="1.800" /></svg>
        </button>
      </div>
      <main className="flex flex-1 min-h-[473px] bg-[#020203]">
        <div className="relative flex-1 overflow-hidden">
          <ModelSpace />
          <ViewCube />
          <NavBar />
          <CommandLine />
        </div>
        <div className="w-[5px] bg-gradient-to-b from-[#d5e5f6] from-[17%] to-[#a3bfe3] to-[19%]" />
      </main>
      <footer className="flex h-7 bg-[#3b3b3b]">
        <div className="flex pl-2 h-[18px] mt-px text-[#b5b5b5]">
          <button type="button" className="w-[54px] font-bold text-white bg-gradient-to-b from-[#555] to-[#8a8a8a] rounded-b-lg">Model</button>
          <button type="button" className="w-[89px] bg-[#555] rounded-b-lg">Présentation1</button>
          <button type="button" className="w-[89px] bg-[#555] rounded-b-lg">Présentation2</button>
          <button type="button" aria-label="New layout" className="flex items-center justify-center w-6 ml-1 h-4 bg-[#4a4a4a] rounded-b-lg">
            <svg viewBox="0 0 8 8" className="w-2 h-2"><path d="M4 0v8M0 4h8" stroke="#ccc" strokeWidth="1.600" /></svg>
          </button>
        </div>
        <StatusBar />
      </footer>
    </div>
  );
}
